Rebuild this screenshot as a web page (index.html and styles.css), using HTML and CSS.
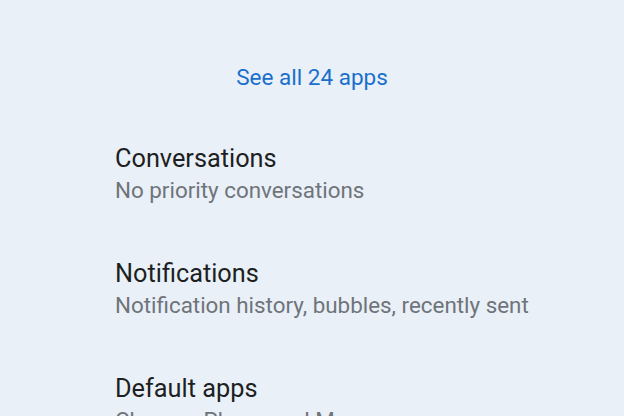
FILE: index.html
```html
<!DOCTYPE html>
<html lang="en">

<head>
    <meta charset="UTF-8">
    <meta name="viewport" content="width=device-width, initial-scale=1.0">
    <title>Apps &amp; notifications</title>
    <link rel="stylesheet" href="styles.css">
</head>

<body>
    <div class="screen">
        <div class="see-all">See all 24 apps</div>

        <div class="item">
            <div class="title">Conversations</div>
            <div class="summary">No priority conversations</div>
        </div>

        <div class="item">
            <div class="title">Notifications</div>
            <div class="summary">Notification history, bubbles, recently sent</div>
        </div>

        <div class="item">
            <div class="title">Default apps</div>
            <div class="summary">Chrome, Phone and Messages</div>
        </div>
    </div>
</body>

</html>
```

FILE: styles.css
```css
body {
    margin: 0;
    background-color: #e9f0f8;
    font-family: Roboto, "Noto Sans", sans-serif;
    overflow: hidden;
}

.screen {
    height: 416px;
    overflow: hidden;
    padding-top: 62px;
    box-sizing: border-box;
}

.see-all {
    text-align: center;
    color: #1a6fcc;
    font-size: 22.5px;
    line-height: 30px;
    margin-bottom: 51px;
}

.item {
    padding-left: 115px;
    margin-bottom: 52px;
}

.title {
    color: #1d1f22;
    font-size: 25.3px;
    line-height: 32px;
}

.summary {
    color: #6f747a;
    font-size: 22.4px;
    line-height: 31px;
}
```
